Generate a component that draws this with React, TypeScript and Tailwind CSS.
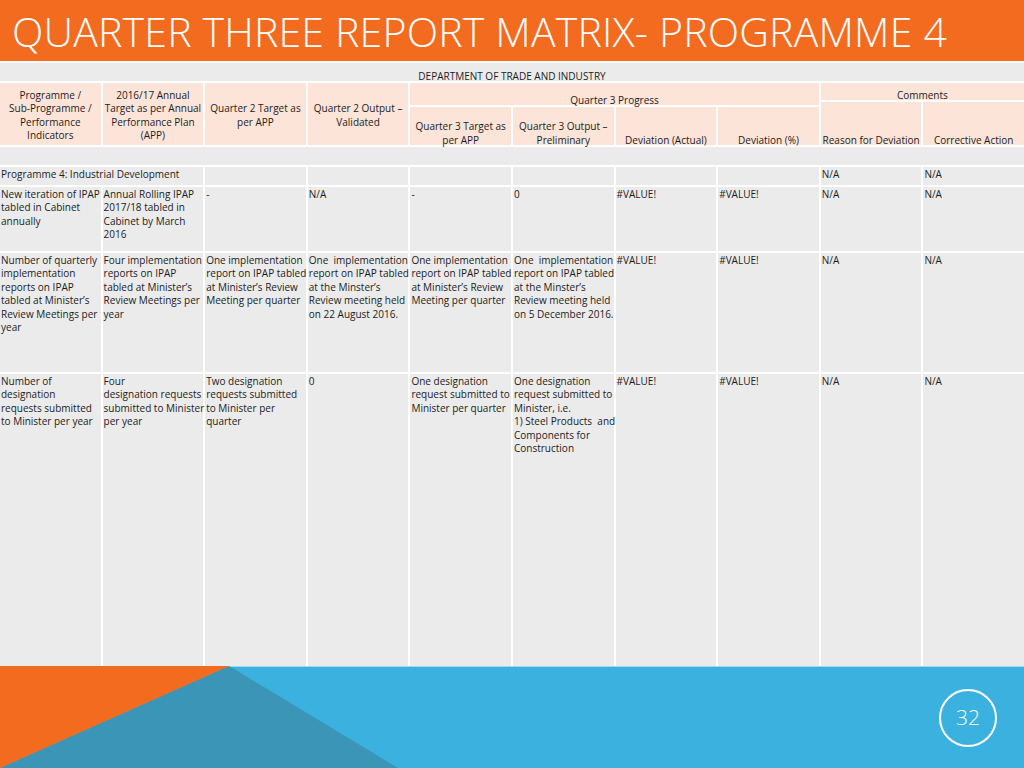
import React from "react";

type Lines = string[];

const headerCols: Lines[] = [
  ["Programme /", "Sub-Programme /", "Performance", "Indicators"],
  ["2016/17 Annual", "Target as per Annual", "Performance Plan", "(APP)"],
  ["Quarter 2 Target as", "per APP"],
  ["Quarter 2 Output –", "Validated"],
];

const q3Cols: Lines[] = [
  ["Quarter 3 Target as", "per APP"],
  ["Quarter 3 Output –", "Preliminary"],
  ["Deviation (Actual)"],
  ["Deviation (%)"],
];

const rows: Lines[][] = [
  [
    ["New iteration of IPAP", "tabled in Cabinet", "annually"],
    ["Annual Rolling IPAP", "2017/18 tabled in", "Cabinet by March", "2016"],
    ["-"],
    ["N/A"],
    ["-"],
    ["0"],
    ["#VALUE!"],
    ["#VALUE!"],
    ["N/A"],
    ["N/A"],
  ],
  [
    ["Number of quarterly", "implementation", "reports on IPAP", "tabled at Minister’s", "Review Meetings per", "year"],
    ["Four implementation", "reports on IPAP", "tabled at Minister’s", "Review Meetings per", "year"],
    ["One implementation", "report on IPAP tabled", "at Minister’s Review", "Meeting per quarter"],
    ["One  implementation", "report on IPAP tabled", "at the Minster’s", "Review meeting held", "on 22 August 2016."],
    ["One implementation", "report on IPAP tabled", "at Minister’s Review", "Meeting per quarter"],
    ["One  implementation", "report on IPAP tabled", "at the Minster’s", "Review meeting held", "on 5 December 2016."],
    ["#VALUE!"],
    ["#VALUE!"],
    ["N/A"],
    ["N/A"],
  ],
  [
    ["Number of", "designation", "requests submitted", "to Minister per year"],
    ["Four", "designation requests", "submitted to Minister", "per year"],
    ["Two designation", "requests submitted", "to Minister per", "quarter"],
    ["0"],
    ["One designation", "request submitted to", "Minister per quarter"],
    ["One designation", "request submitted to", "Minister, i.e.", "1) Steel Products  and", "Components for", "Construction"],
    ["#VALUE!"],
    ["#VALUE!"],
    ["N/A"],
    ["N/A"],
  ],
];

function Text({ lines }: { lines: Lines }) {
  return (
    <>
      {lines.map((l, i) => (
        <div key={i} className="whitespace-pre">
          {l}
        </div>
      ))}
    </>
  );
}

const headStart = ["col-start-1", "col-start-2", "col-start-3", "col-start-4"];
const q3Start = ["col-start-5", "col-start-6", "col-start-7", "col-start-8"];

export default function App() {
  return (
    <div className="flex h-[768px] w-[1024px] flex-col overflow-hidden bg-white font-['Open_Sans',sans-serif]">
      {/* title bar */}
      <div className="h-[61px] shrink-0 bg-[#f36b1f] pl-[12px] pt-[6px]">
        <h1 className="whitespace-nowrap text-[41px] font-light leading-[50px] tracking-[0.2px] text-white">
          QUARTER THREE REPORT MATRIX- PROGRAMME 4
        </h1>
      </div>

      {/* matrix */}
      <div className="grid min-h-0 flex-1 grid-cols-10 grid-rows-[18px_17px_3px_38px_18px_18px_64px_119px_1fr] gap-[2px] bg-white pt-[2px] text-[10px] leading-[13.4px] text-[#1c1c1c]">
        <div className="col-span-10 col-start-1 row-start-1 flex items-end justify-center bg-[#ebebeb]">
          <span className="relative top-[2px]">DEPARTMENT OF TRADE AND INDUSTRY</span>
        </div>

        {headerCols.map((c, i) => (
          <div
            key={i}
            className={`${headStart[i]} row-span-3 row-start-2 flex flex-col items-center justify-center bg-[#fde4d8] pt-[3px] text-center`}
          >
            <Text lines={c} />
          </div>
        ))}

        <div className="col-span-4 col-start-5 row-span-2 row-start-2 flex items-end justify-center bg-[#fde4d8]">
          <span className="relative top-[2px]">Quarter 3 Progress</span>
        </div>
        <div className="col-span-2 col-start-9 row-start-2 flex items-end justify-center bg-[#fde4d8]">
          <span className="relative top-[2px]">Comments</span>
        </div>

        {q3Cols.map((c, i) => (
          <div
            key={i}
            className={`${q3Start[i]} row-start-4 flex flex-col items-center justify-end bg-[#fde4d8] text-center`}
          >
            <div className="relative top-[2px]">
              <Text lines={c} />
            </div>
          </div>
        ))}
        <div className="col-start-9 row-span-2 row-start-3 flex items-end justify-center bg-[#fde4d8]">
          <span className="relative top-[2px]">Reason for Deviation</span>
        </div>
        <div className="col-start-10 row-span-2 row-start-3 flex items-end justify-center bg-[#fde4d8]">
          <span className="relative top-[2px]">Corrective Action</span>
        </div>

        {/* body */}
        <div className="col-span-10 col-start-1 row-start-5 bg-[#ebebeb]" />

        <div className="col-span-2 col-start-1 row-start-6 bg-[#ebebeb] pl-px pt-px">
          Programme 4: Industrial Development
        </div>
        {Array.from({ length: 6 }).map((_, i) => (
          <div key={i} className="row-start-6 bg-[#ebebeb]" />
        ))}
        <div className="row-start-6 bg-[#ebebeb] pl-px pt-px">N/A</div>
        <div className="row-start-6 bg-[#ebebeb] pl-px pt-px">N/A</div>

        {rows.map((r, ri) =>
          r.map((cell, ci) => (
            <div key={`${ri}-${ci}`} className="min-w-0 bg-[#ebebeb] pl-px pt-px">
              <Text lines={cell} />
            </div>
          ))
        )}
      </div>

      {/* footer band */}
      <div className="relative h-[102px] shrink-0 bg-[#3bb1e0]">
        <svg width="1024" height="102" viewBox="0 0 1024 102" className="block">
          <rect x="0" y="0" width="1024" height="1" fill="#9fdaf2" />
          <polygon points="229,0 0,102 398,102" fill="#3a95b7" />
          <polygon points="0,0 229,0 0,102" fill="#f36b1f" />
        </svg>
        <div className="absolute left-[939px] top-[23px] flex h-[58px] w-[58px] items-center justify-center rounded-full border-2 border-white text-[21px] font-light text-white">
          32
        </div>
      </div>
    </div>
  );
}
